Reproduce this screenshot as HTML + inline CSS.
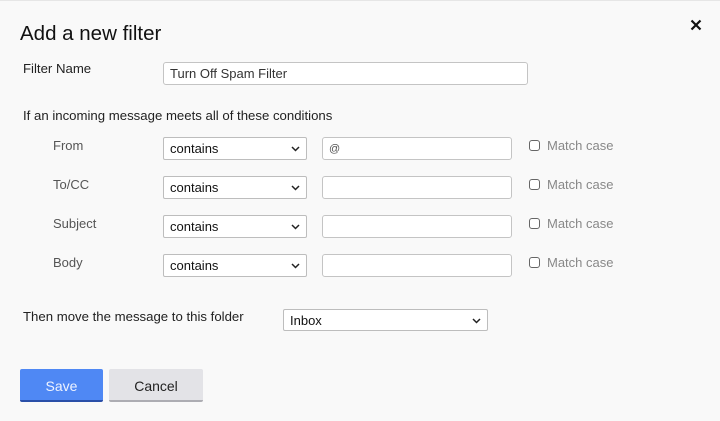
<!DOCTYPE html><html><head><style>
body{margin:0;width:720px;height:421px;background:#f9f9f9;font-family:"Liberation Sans",sans-serif;position:relative;overflow:hidden;color:#222}
.a{position:absolute}
.t{font-size:13.2px;color:#222}
.g{font-size:13px;color:#555}
.in{position:absolute;box-sizing:border-box;background:#fff;border:1px solid #c4c4c4;border-radius:3px;font-size:13px;padding:3px 0 0 6px;color:#222}
.sel{position:absolute;box-sizing:border-box;background:#fff;border:1px solid #bdbdbd;border-radius:2px;font-size:13px;padding:3px 0 0 6px;color:#111}
.sel svg{position:absolute;right:6px;top:8px}
.cb{position:absolute;width:11px;height:11px;border:1px solid #666;border-radius:3px;box-sizing:border-box;background:#fff}
.mc{position:absolute;font-size:13px;color:#888}
</style></head><body>
<div class="a" style="left:0;top:0;width:720px;height:1px;background:#e6e6e6"></div>
<div class="a" style="left:20px;top:22px;font-size:20.5px;color:#111">Add a new filter</div>
<svg class="a" style="left:690px;top:19px" width="12" height="12" viewBox="0 0 12 12"><path d="M1.5 1.5L10.5 10.5M10.5 1.5L1.5 10.5" stroke="#111" stroke-width="2.2"/></svg>
<div class="a t" style="left:23px;top:61px">Filter Name</div>
<div class="in" style="left:163px;top:62px;width:365px;height:23px;color:#333">Turn Off Spam Filter</div>
<div class="a t" style="left:23px;top:108px">If an incoming message meets all of these conditions</div>

<div class="a g" style="left:53px;top:138px">From</div>
<div class="a g" style="left:53px;top:177px">To/CC</div>
<div class="a g" style="left:53px;top:216px">Subject</div>
<div class="a g" style="left:53px;top:255px">Body</div>

<div class="sel" style="left:163px;top:137px;width:144px;height:23px">contains<svg width="9" height="6"><path d="M1 1l3.5 3.5L8 1" stroke="#222" stroke-width="1.5" fill="none"/></svg></div>
<div class="sel" style="left:163px;top:176px;width:144px;height:23px">contains<svg width="9" height="6"><path d="M1 1l3.5 3.5L8 1" stroke="#222" stroke-width="1.5" fill="none"/></svg></div>
<div class="sel" style="left:163px;top:215px;width:144px;height:23px">contains<svg width="9" height="6"><path d="M1 1l3.5 3.5L8 1" stroke="#222" stroke-width="1.5" fill="none"/></svg></div>
<div class="sel" style="left:163px;top:254px;width:144px;height:23px">contains<svg width="9" height="6"><path d="M1 1l3.5 3.5L8 1" stroke="#222" stroke-width="1.5" fill="none"/></svg></div>

<div class="in" style="left:322px;top:137px;width:190px;height:23px;font-size:11px;padding-top:5px;color:#555">@</div>
<div class="in" style="left:322px;top:176px;width:190px;height:23px"></div>
<div class="in" style="left:322px;top:215px;width:190px;height:23px"></div>
<div class="in" style="left:322px;top:254px;width:190px;height:23px"></div>

<div class="cb" style="left:529px;top:140px"></div><div class="mc" style="left:547px;top:138px">Match case</div>
<div class="cb" style="left:529px;top:179px"></div><div class="mc" style="left:547px;top:177px">Match case</div>
<div class="cb" style="left:529px;top:218px"></div><div class="mc" style="left:547px;top:216px">Match case</div>
<div class="cb" style="left:529px;top:257px"></div><div class="mc" style="left:547px;top:255px">Match case</div>

<div class="a t" style="left:23px;top:309px">Then move the message to this folder</div>
<div class="sel" style="left:283px;top:309px;width:205px;height:22px;padding-top:3px">Inbox<svg width="9" height="6" style="top:8px"><path d="M1 1l3.5 3.5L8 1" stroke="#222" stroke-width="1.5" fill="none"/></svg></div>

<div class="a" style="left:20px;top:369px;width:83px;height:31px;background:#4f88f4;border-bottom:2px solid #2a4fa8;border-radius:2px;color:#eef3ff;font-size:14px;text-align:center;line-height:34px">Save</div>
<div class="a" style="left:109px;top:369px;width:94px;height:31px;background:#e3e3e7;border-bottom:2px solid #adadb3;border-radius:2px;color:#222;font-size:14px;text-align:center;line-height:34px">Cancel</div>
</body></html>
